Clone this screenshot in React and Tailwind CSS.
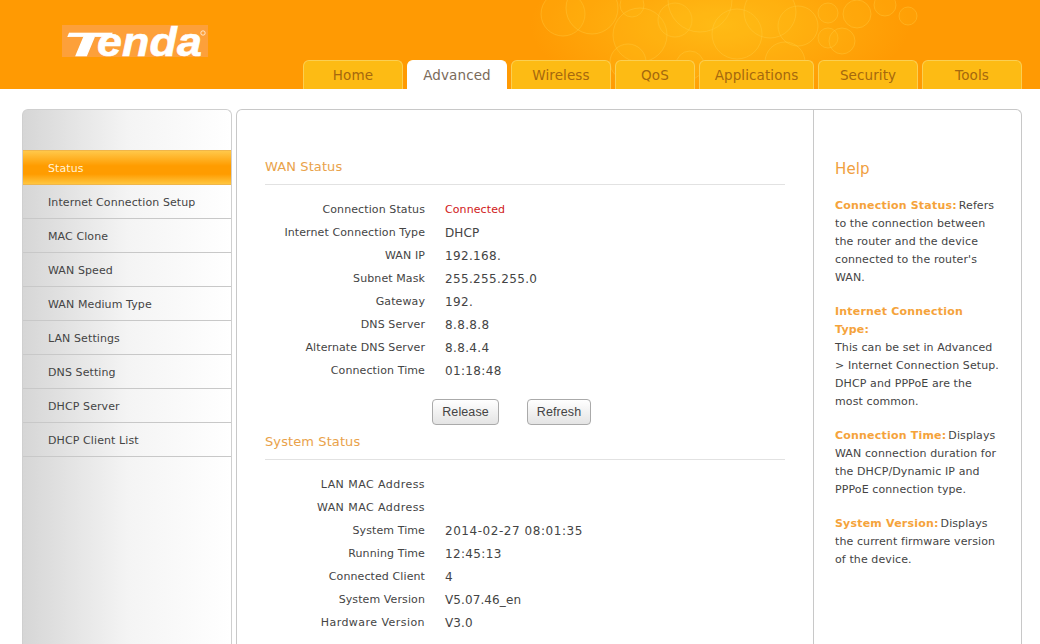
import React from 'react';

const tabs = [
  { name: 'Home', w: 'w-[100px]' },
  { name: 'Advanced', w: 'w-[100px]', active: true },
  { name: 'Wireless', w: 'w-[100px]' },
  { name: 'QoS', w: 'w-[80px]' },
  { name: 'Applications', w: 'w-[115px]' },
  { name: 'Security', w: 'w-[100px]' },
  { name: 'Tools', w: 'w-[100px]' },
];

const menu = ['Internet Connection Setup', 'MAC Clone', 'WAN Speed', 'WAN Medium Type', 'LAN Settings', 'DNS Setting', 'DHCP Server', 'DHCP Client List'];

const wanRows = [
  ['Connection Status', 'Connected'],
  ['Internet Connection Type', 'DHCP'],
  ['WAN IP', '192.168.'],
  ['Subnet Mask', '255.255.255.0'],
  ['Gateway', '192.'],
  ['DNS Server', '8.8.8.8'],
  ['Alternate DNS Server', '8.8.4.4'],
  ['Connection Time', '01:18:48'],
];

const systemRows = [
  ['LAN MAC Address', ''],
  ['WAN MAC Address', ''],
  ['System Time', '2014-02-27 08:01:35'],
  ['Running Time', '12:45:13'],
  ['Connected Client', '4'],
  ['System Version', 'V5.07.46_en'],
  ['Hardware Version', 'V3.0'],
];

// bubbles in the header art
const bubbles = [
  [563, 14, 22], [592, 8, 26], [632, 5, 12], [640, 35, 27], [675, 20, 17], [700, 0, 32],
  [737, 34, 25], [798, 26, 20], [770, 12, 26], [628, 62, 18], [785, 62, 20], [828, 13, 10],
  [857, 14, 14], [885, 5, 11], [908, 16, 9], [828, 38, 10], [842, 41, 13], [690, 65, 14],
];

const InfoRow = ({ label, value }) => {
  let valueClass = 'ml-5 text-[12px]';
  if (value === 'Connected') valueClass = 'ml-5 pt-[2px] text-[11px] tracking-[0.1px] text-[#d01818]';
  else if (value.length > 15) valueClass = 'ml-5 text-[12px] tracking-[0.55px]';
  else if (/^\d/.test(value)) valueClass = 'ml-5 text-[12px] tracking-[0.35px]';
  const wide = label.includes('MAC') || label.startsWith('Hardware');
  return (
    <div className="flex h-[23px] items-center">
      <div className={wide ? 'w-[160px] pt-[2px] text-right tracking-[0.45px]' : 'w-[160px] pt-[2px] text-right'}>{label}</div>
      <div className={valueClass}>{value}</div>
    </div>
  );
};

const HelpItem = ({ title, text, className }) => (
  <p className={className}>
    <b className="mr-[2px] tracking-[0.2px] text-[#f5a33b]">{title}</b>
    {text}
  </p>
);

export default function App() {
  return (
    <div className="h-[644px] w-[1040px] overflow-hidden bg-white font-['DejaVu_Sans',sans-serif] text-[11px] tracking-[0.1px] text-[#444]">
      <header className="relative flex h-[89px] items-end justify-end bg-[#ff9a03] pr-[18px]">
        <svg className="absolute left-0 top-0" width="1040" height="89">
          <defs>
            <radialGradient id="glow">
              <stop offset="0%" stopColor="#ffc21a" stopOpacity="0.8" />
              <stop offset="100%" stopColor="#ffc21a" stopOpacity="0" />
            </radialGradient>
          </defs>
          <ellipse cx="720" cy="25" rx="190" ry="80" fill="url(#glow)" />
          {bubbles.map(([cx, cy, r], i) => (
            <circle key={i} cx={cx} cy={cy} r={r} fill="#ffc21a" fillOpacity="0.16" stroke="#ffd24a" strokeOpacity="0.35" />
          ))}
        </svg>
        <div className="absolute left-[62px] top-[25px] h-[32px] w-[146px] bg-[#fda03a]">
          <svg width="146" height="32" className="overflow-visible">
            <text x="1" y="31" fill="#fff" stroke="#fff" strokeWidth="0.6" fontFamily="Liberation Sans" fontSize="33" fontWeight="700" fontStyle="italic" textLength="44" lengthAdjust="spacingAndGlyphs">T</text>
            <text x="35" y="31" fill="#fff" stroke="#fff" strokeWidth="0.6" fontFamily="Liberation Sans" fontSize="40" fontWeight="700" fontStyle="italic" textLength="105" lengthAdjust="spacingAndGlyphs">enda</text>
            <circle cx="141" cy="8" r="2.2" fill="none" stroke="#fff" strokeWidth="0.7" />
          </svg>
        </div>
        <nav className="relative flex gap-1">
          {tabs.map(tab => (
            <div
              key={tab.name}
              className={`${tab.w} flex h-[29px] items-center justify-center rounded-t-md border border-b-0 text-[13.5px] ${
                tab.active ? 'border-white bg-white text-[#7a6a5a]' : 'border-[#fbcf52] bg-[#fdbb14] text-[#a5680e]'
              }`}
            >
              {tab.name}
            </div>
          ))}
        </nav>
      </header>

      <div className="flex gap-1 pl-[22px] pt-5">
        <aside className="h-[560px] w-[210px] rounded-t-md border border-b-0 border-[#cfcfcf] bg-gradient-to-r from-[#d6d6d6] via-[#f4f4f4] to-[#ffffff]">
          <div className="h-[40px]"></div>
          <div className="flex h-[35px] items-center border-y border-[#f0b64a] bg-[linear-gradient(#ffc84a,#ff9c00_45%,#ff9c00_70%,#ffc640)] pl-[25px] pt-[3px] text-[11px] text-[#fff3d6]">
            Status
          </div>
          {menu.map(item => (
            <div key={item} className="flex h-[34px] items-center border-b border-[#c8c8c8] pl-[25px] pt-[3px]">
              {item}
            </div>
          ))}
        </aside>

        <main className="flex h-[560px] w-[786px] rounded-t-md border border-b-0 border-[#c8c8c8]">
          <section className="w-[577px] border-r border-[#c8c8c8] pl-[28px] pr-[28px] pt-[47px]">
            <h2 className="border-b border-[#e2e2e2] pb-[7px] text-[13px] leading-[20px] text-[#e9a24a]">WAN Status</h2>
            <div className="pt-[13px]">
              {wanRows.map(([label, value]) => <InfoRow key={label} label={label} value={value} />)}
            </div>
            <div className="flex h-[47px] items-center justify-center gap-7 pr-[27px] pt-[13px] font-['Liberation_Sans',sans-serif]">
              <button className="h-[26px] w-[67px] rounded-[4px] border border-[#aaa] bg-gradient-to-b from-white to-[#e4e4e4] text-[12.5px]">Release</button>
              <button className="h-[26px] w-[64px] rounded-[4px] border border-[#aaa] bg-gradient-to-b from-white to-[#e4e4e4] text-[12.5px]">Refresh</button>
            </div>
            <h2 className="mt-[3px] border-b border-[#e2e2e2] pb-[7px] text-[13px] leading-[20px] text-[#e9a24a]">System Status</h2>
            <div className="pt-[13px]">
              {systemRows.map(([label, value]) => <InfoRow key={label} label={label} value={value} />)}
            </div>
          </section>
          <section className="flex-1 pl-[21px] pr-[18px] pt-[49px] leading-[18px]">
            <h3 className="text-[15px] leading-[20px] text-[#f0a040]">Help</h3>
            <HelpItem className="mt-[18px]" title="Connection Status:" text="Refers to the connection between the router and the device connected to the router's WAN." />
            <p className="mt-[16px]"><b className="tracking-[0.2px] text-[#f5a33b]">Internet Connection<br />Type:</b><br />This can be set in Advanced &gt; Internet Connection Setup. DHCP and PPPoE are the most common.</p>
            <HelpItem className="mt-[16px]" title="Connection Time:" text="Displays WAN connection duration for the DHCP/Dynamic IP and PPPoE connection type." />
            <HelpItem className="mt-[16px]" title="System Version:" text="Displays the current firmware version of the device." />
          </section>
        </main>
      </div>
    </div>
  );
}
